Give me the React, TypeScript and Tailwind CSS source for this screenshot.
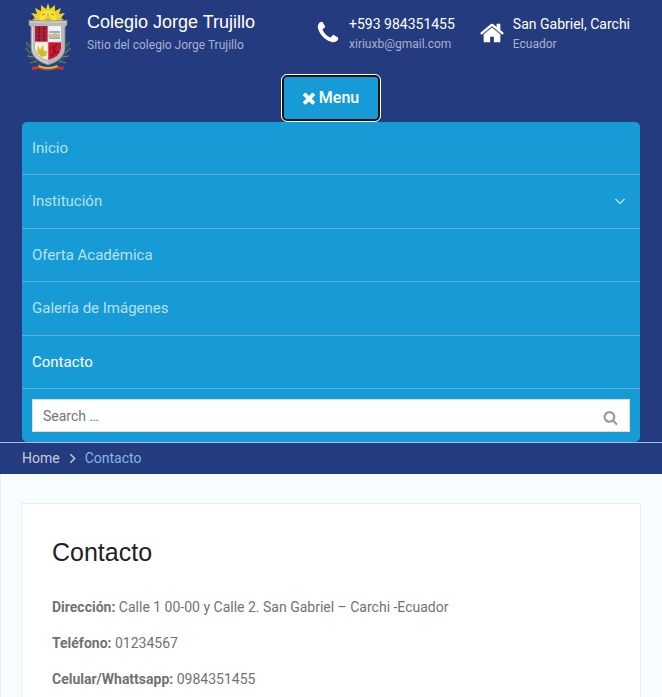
import React from "react";

const icons = {
  phone:
    "M1600 1240q0 27-10 70.5t-21 68.5q-21 50-122 106-94 51-186 51-27 0-53-3.5t-57.5-12.5-47-14.5-55.5-20.5-49-18q-98-35-175-83-127-79-264-216t-216-264q-48-77-83-175-3-9-18-49t-20.5-55.5-14.5-47-12.5-57.5-3.5-53q0-92 51-186 56-101 106-122 25-11 68.5-21t70.5-10q14 0 21 3 18 6 53 76 11 19 30 54t35 63.5 31 53.5q3 4 17.5 25t21.5 35.5 7 28.5q0 20-28.5 50t-62 55-62 53-28.5 46q0 9 5 22.5t8.5 20.5 14 24 11.5 19q76 137 174 235t235 174q2 1 19 11.5t24 14 20.5 8.5 22.5 5q18 0 46-28.5t53-62 55-62 50-28.5q14 0 28.5 7t35.5 21.5 25 17.5q25 15 53.5 31t63.5 35 54 30q70 35 76 53 3 7 3 21z",
  home: "M1472 992v480q0 26-19 45t-45 19h-384v-384h-256v384h-384q-26 0-45-19t-19-45v-480q0-1 .5-3t.5-3l575-474 575 474q1 2 1 6zm223-69l-62 74q-8 9-21 11h-3q-13 0-21-7l-692-577-692 577q-12 8-24 7-13-2-21-11l-62-74q-8-10-7-23.5t11-21.5l719-599q32-26 76-26t76 26l244 204v-195q0-14 9-23t23-9h192q14 0 23 9t9 23v408l219 182q10 8 11 21.5t-7 23.5z",
  close:
    "M1490 1322q0 40-28 68l-136 136q-28 28-68 28t-68-28l-294-294-294 294q-28 28-68 28t-68-28l-136-136q-28-28-28-68t28-68l294-294-294-294q-28-28-28-68t28-68l136-136q28-28 68-28t68 28l294 294 294-294q28-28 68-28t68 28l136 136q28 28 28 68t-28 68l-294 294 294 294q28 28 28 68z",
  search:
    "M1216 832q0-185-131.5-316.5t-316.5-131.5-316.5 131.5-131.5 316.5 131.5 316.5 316.5 131.5 316.5-131.5 131.5-316.5zm512 832q0 52-38 90t-90 38q-54 0-90-38l-343-342q-179 124-399 124-143 0-273.5-55.5t-225-150-150-225-55.5-273.5 55.5-273.5 150-225 225-150 273.5-55.5 273.5 55.5 225 150 150 225 55.5 273.5q0 220-124 399l343 343q37 37 37 90z",
};

function Icon({ name, className }: { name: keyof typeof icons; className: string }) {
  return (
    <svg viewBox="0 0 1792 1792" fill="currentColor" className={className} aria-hidden="true">
      <path d={icons[name]} />
    </svg>
  );
}

function Angle({ d, className }: { d: string; className: string }) {
  return (
    <svg viewBox="0 0 12 12" fill="none" stroke="currentColor" strokeWidth="1.4" className={className} aria-hidden="true">
      <path d={d} />
    </svg>
  );
}

function Crest() {
  return (
    <svg viewBox="0 0 50 70" className="h-[70px] w-[50px] shrink-0" role="img" aria-label="Colegio Jorge Trujillo">
      <path
        d="M26 1l2 6 5-4 0 6 6-3-2 6 6-1-4 5 3 2-3 2H13l-3-2 3-2-4-5 6 1-2-6 6 3 0-6 5 4z"
        fill="#ecd02c"
      />
      <path d="M17 18q1-10 9-10t9 10z" fill="#f8e13c" />
      <path d="M20 13l3-1M29 12l3 1M26 12v3M23 17h6" stroke="#a98c24" strokeWidth="1" />
      <path d="M6 40q-3 14 12 23M45 40q3 14-12 23" fill="none" stroke="#2c5257" strokeWidth="2.500" />
      <path
        d="M4 40l4 5M3 46l6 5M5 54l7 1M8 61l7-2M48 40l-4 5M49 46l-6 5M47 54l-7 1M44 61l-7-2"
        stroke="#74857c"
        strokeWidth="1"
      />
      <path
        d="M7 18q4 2 7 0l4 1h16l4-1q3 2 7 0v5l-2 2v22q-1 11-17 16Q10 58 9 47V25l-2-2z"
        fill="#b9b9bd"
        stroke="#85858c"
        strokeWidth=".8"
      />
      <path d="M8 20h36M10.500 25v21q1 10 15.500 15" fill="none" stroke="#dadadd" strokeWidth="1.1" />
      <path d="M13 24h13v16H13z" fill="#b51c35" />
      <path d="M26 24h13v16H26z" fill="#f1f2f2" />
      <path d="M13 40h13v18q-12-3-13-12z" fill="#f3f1df" />
      <path d="M26 40h13v6q-1 9-13 12z" fill="#cf1530" />
      <path d="M17 25v14M22 25v14" stroke="#6c1e2d" strokeWidth="2" strokeDasharray="3 1" />
      <path d="M27 29h11v2H27zM27 35h11v2H27z" fill="#83b5e4" />
      <path d="M26 32h4l3-1 5 1v3h-4l-3 1-5-1z" fill="#d9be70" />
      <path d="M16 43l2 5 3-5 1 6 3 0-1 5-5 1-4-5z" fill="#d9b927" />
      <path d="M35 42l-3 4 0 6-3 2M30 44l4 7 3-1" fill="none" stroke="#7b1829" strokeWidth="1.2" />
      <path d="M26 24v34M13 40h26" stroke="#d6cdcd" strokeWidth=".8" />
      <path d="M10 65l7-1 5 1h8l5-1 7 1-1 3-6-1-8 1h-3l-7-1-7 1z" fill="#cf3030" />
      <path d="M17 63q9 4 18 0l1 2q-10 4-20 0z" fill="#e0b43a" />
      <path d="M19 67q7 2 14 0" fill="none" stroke="#44745a" strokeWidth="1.2" />
    </svg>
  );
}

const menu = [
  { label: "Inicio" },
  { label: "Institución", sub: true },
  { label: "Oferta Académica" },
  { label: "Galería de Imágenes" },
  { label: "Contacto", current: true },
];

const details = [
  ["Dirección:", "Calle 1 00-00 y Calle 2. San Gabriel – Carchi -Ecuador"],
  ["Teléfono:", "01234567"],
  ["Celular/Whattsapp:", "0984351455"],
];

export default function App() {
  return (
    <div className="min-h-screen bg-[#f7fcff] font-['Roboto',sans-serif] text-sm text-[#727272]">
      <header className="bg-[#243b80] px-[22px]">
        <div className="flex h-[74px] items-start justify-between">
          <div className="flex items-start gap-[15px]">
            <a href="#inicio" className="pt-[2px]">
              <Crest />
            </a>
            <div className="pt-[10px]">
              <a href="#inicio" className="block font-['Liberation_Sans',sans-serif] text-lg leading-6 text-white">
                Colegio Jorge Trujillo
              </a>
              <p className="text-xs leading-[22px] text-[#a7b1cc]">Sitio del colegio Jorge Trujillo</p>
            </div>
          </div>
          <address className="flex gap-6 pr-[10px] pt-[14px] not-italic">
            <div className="flex gap-2">
              <Icon name="phone" className="mt-[6px] size-[26px] text-white" />
              <div>
                <a href="tel:+593984351455" className="block leading-5 text-white">+593 984351455</a>
                <a href="mailto:xiriuxb@gmail.com" className="block text-xs leading-5 text-[#a7b1cc]">xiriuxb@gmail.com</a>
              </div>
            </div>
            <div className="flex gap-2">
              <Icon name="home" className="mt-[6px] size-[26px] text-white" />
              <div>
                <p className="leading-5 text-white">San Gabriel, Carchi</p>
                <p className="text-xs leading-5 text-[#a7b1cc]">Ecuador</p>
              </div>
            </div>
          </address>
        </div>
        <div className="flex justify-center">
          <button
            type="button"
            aria-expanded="true"
            className="flex h-12 items-center gap-px rounded-md border border-white bg-[#179bd7] pl-[18px] pr-[21px] text-base font-medium text-white ring-2 ring-inset ring-[#101010]"
          >
            <Icon name="close" className="size-[18px]" />
            Menu
          </button>
        </div>
        <nav className="rounded-[5px] bg-[#179bd7]">
          <ul>
            {menu.map((item) => (
              <li key={item.label} className="h-[53px] border-b border-[#5fb1da] even:h-[54px]">
                <a
                  href="#contacto"
                  aria-current={item.current ? "page" : undefined}
                  className={`flex items-center justify-between px-[10px] pt-[14px] text-[15px] leading-6 ${item.current ? "text-white" : "text-[#b9e1f3]"}`}
                >
                  {item.label}
                  {item.sub && <Angle d="M1.5 4l4.5 4.5L10.5 4" className="mr-1 size-3" />}
                </a>
              </li>
            ))}
          </ul>
          <form className="p-[10px]" onSubmit={(e) => e.preventDefault()}>
            <div className="flex h-[33px] border border-[#dddddd] bg-white">
              <input
                type="search"
                aria-label="Search"
                placeholder="Search …"
                className="min-w-0 flex-1 px-[10px] text-sm text-[#727272] outline-none placeholder:text-[#757575]"
              />
              <button type="submit" aria-label="Submit search" className="px-[11px] pt-1 text-[#999999]">
                <Icon name="search" className="size-[15px]" />
              </button>
            </div>
          </form>
        </nav>
      </header>
      <nav
        aria-label="Breadcrumb"
        className="flex h-8 items-start gap-[6px] border-t border-[#a5bce8] bg-[#243b80] px-[22px] pt-[5px] leading-5"
      >
        <a href="#inicio" className="text-[#c6cbdc]">Home</a>
        <Angle d="M4 2l4 4-4 4" className="mt-1 w-[13px] text-[#c6cbdc]" />
        <span className="text-[#86b7e2]">Contacto</span>
      </nav>
      <main className="border-l border-[#e9eef1] pl-5 pr-[21px] pt-[29px]">
        <article className="border border-[#e7edf0] bg-white px-[30px] pt-[30px]">
          <h1 className="mb-[25px] font-['Liberation_Sans',sans-serif] text-[25px] leading-9 text-[#222222]">Contacto</h1>
          {details.map(([label, value]) => (
            <p key={label} className="mb-3 leading-6">
              <strong className="font-bold">{label}</strong> {value}
            </p>
          ))}
        </article>
      </main>
    </div>
  );
}
